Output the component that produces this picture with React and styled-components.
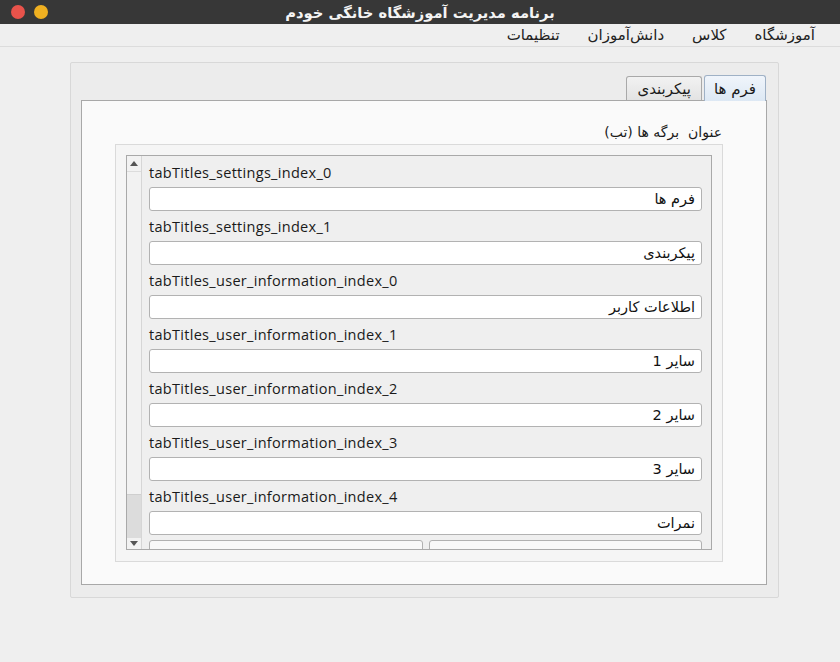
import React from 'react';
import styled, { createGlobalStyle } from 'styled-components';

const GlobalStyle = createGlobalStyle`
html, body { margin: 0; padding: 0; background: #efefef; }
body { font-family: "DejaVu Sans", "Noto Sans", sans-serif; width: 840px; height: 662px; overflow: hidden; }
* { box-sizing: border-box; }
`;

const Window = styled.div`
width: 840px;
height: 662px;
background: #efefef;
display: flex;
flex-direction: column;
`;

const TitleBar = styled.div`
position: relative;
height: 24px;
background: #373737;
display: flex;
align-items: center;
justify-content: center;
`;

const Lights = styled.div`
position: absolute;
left: 11px;
top: 5px;
display: flex;
gap: 9px;
`;

const Light = styled.span`
width: 14px;
height: 14px;
border-radius: 50%;
background: ${p => p.color};
`;

const Title = styled.div`
color: #f4f4f4;
font-weight: bold;
font-size: 14.7px;
direction: rtl;
`;

const MenuBar = styled.div`
height: 23px;
display: flex;
direction: rtl;
align-items: center;
padding-right: 11px;
background: #efefef;
border-bottom: 1px solid #dcdcdc;
`;

const MenuItem = styled.div`
font-size: 15px;
color: #222;
padding: 0 14px;
line-height: 23px;
`;

const Body = styled.div`
padding: 15px 61px 0 70px;
`;

const OuterGroup = styled.div`
height: 536px;
border: 1px solid #d8d8d8;
border-radius: 2px;
background: #ececec;
padding: 11px 11px 12px 10px;
display: flex;
flex-direction: column;
`;

const TabBar = styled.div`
display: flex;
direction: rtl;
align-items: flex-end;
height: 26px;
padding-right: 1px;
gap: 2px;
flex-shrink: 0;
`;

const Tab = styled.div`
height: ${p => (p.active ? '26px' : '24px')};
padding: 0 ${p => (p.active ? '9px' : '10px')};
font-size: 15px;
color: #1a1a1a;
display: flex;
align-items: center;
border: 1px solid ${p => (p.active ? '#9fb1c6' : '#a9a9a9')};
border-bottom: none;
border-radius: 3px 3px 0 0;
background: ${p => (p.active ? 'linear-gradient(#f0f5fb, #dde8f4)' : 'linear-gradient(#f2f2f2, #e3e3e3)')};
margin-bottom: ${p => (p.active ? '-1px' : '0')};
position: relative;
z-index: ${p => (p.active ? 1 : 0)};
`;

const Pane = styled.div`
flex: 1;
min-height: 0;
border: 1px solid #a8a8a8;
background: #fafafa;
padding: 20px 43px 22px 33px;
display: flex;
flex-direction: column;
`;

const SectionLabel = styled.div`
direction: rtl;
font-size: 14px;
line-height: 22px;
color: #1a1a1a;
margin-bottom: 1px;
margin-right: 1px;
white-space: pre;
`;

const Frame = styled.div`
flex: 1;
min-height: 0;
border: 1px solid #dadada;
background: #f5f5f5;
padding: 10px 10px 11px 10px;
display: flex;
`;

const ScrollArea = styled.div`
flex: 1;
min-height: 0;
border: 1px solid #a9a9a9;
display: flex;
overflow: hidden;
background: #efefef;
`;

const ScrollBar = styled.div`
width: 15px;
border-right: 1px solid #d6d6d6;
background: #f2f2f2;
display: flex;
flex-direction: column;
`;

const ArrowButton = styled.div`
height: ${p => (p.down ? '12px' : '16px')};
flex-shrink: 0;
display: flex;
align-items: center;
justify-content: center;
border-${p => (p.down ? 'top' : 'bottom')}: 1px solid #dcdcdc;
`;

const Track = styled.div`
flex: 1;
display: flex;
flex-direction: column;
justify-content: flex-end;
`;

const Handle = styled.div`
height: 43px;
background: #dcdcdc;
border-top: 1px solid #cfcfcf;
`;

const Viewport = styled.div`
flex: 1;
min-height: 0;
overflow: hidden;
padding: 6px 9px 0 7px;
`;

const FieldLabel = styled.div`
font-family: "Open Sans", "DejaVu Sans", sans-serif;
font-size: 14.5px;
line-height: 22px;
color: #1a1a1a;
letter-spacing: 0.3px;
`;

const Input = styled.div`
height: 24px;
margin-top: 3px;
margin-bottom: 5px;
border: 1px solid #b2b2b2;
border-radius: 3px;
background: #fff;
direction: rtl;
padding: 0 6px;
font-size: 14.5px;
line-height: 22px;
color: #111;
`;

const ButtonRow = styled.div`
display: flex;
gap: 6px;
`;

const CutButton = styled.div`
flex: 1;
height: 26px;
border: 1px solid #b0b0b0;
border-radius: 3px;
background: #f8f8f8;
`;

const Arrow = ({ down }) => (
  <svg width="8" height="5" viewBox="0 0 8 5">
    <path d={down ? 'M0 0 L8 0 L4 5 Z' : 'M0 5 L8 5 L4 0 Z'} fill="#555" />
  </svg>
);

const fields = [
  ['tabTitles_settings_index_0', 'فرم ها'],
  ['tabTitles_settings_index_1', 'پیکربندی'],
  ['tabTitles_user_information_index_0', 'اطلاعات کاربر'],
  ['tabTitles_user_information_index_1', 'سایر 1'],
  ['tabTitles_user_information_index_2', 'سایر 2'],
  ['tabTitles_user_information_index_3', 'سایر 3'],
  ['tabTitles_user_information_index_4', 'نمرات'],
];

export default function App() {
  return (
    <Window>
      <GlobalStyle />
      <TitleBar>
        <Lights>
          <Light color="#e8534b" />
          <Light color="#efb021" />
        </Lights>
        <Title>برنامه مدیریت آموزشگاه خانگی خودم</Title>
      </TitleBar>
      <MenuBar>
        <MenuItem>آموزشگاه</MenuItem>
        <MenuItem>کلاس</MenuItem>
        <MenuItem>دانش‌آموزان</MenuItem>
        <MenuItem>تنظیمات</MenuItem>
      </MenuBar>
      <Body>
        <OuterGroup>
          <TabBar>
            <Tab active>فرم ها</Tab>
            <Tab>پیکربندی</Tab>
          </TabBar>
          <Pane>
            <SectionLabel>عنوان  برگه ها (تب)</SectionLabel>
            <Frame>
              <ScrollArea>
                <ScrollBar>
                  <ArrowButton><Arrow /></ArrowButton>
                  <Track><Handle /></Track>
                  <ArrowButton down><Arrow down /></ArrowButton>
                </ScrollBar>
                <Viewport>
                  {fields.map(([label, value]) => (
                    <React.Fragment key={label}>
                      <FieldLabel>{label}</FieldLabel>
                      <Input>{value}</Input>
                    </React.Fragment>
                  ))}
                  <ButtonRow>
                    <CutButton />
                    <CutButton />
                  </ButtonRow>
                </Viewport>
              </ScrollArea>
            </Frame>
          </Pane>
        </OuterGroup>
      </Body>
    </Window>
  );
}
